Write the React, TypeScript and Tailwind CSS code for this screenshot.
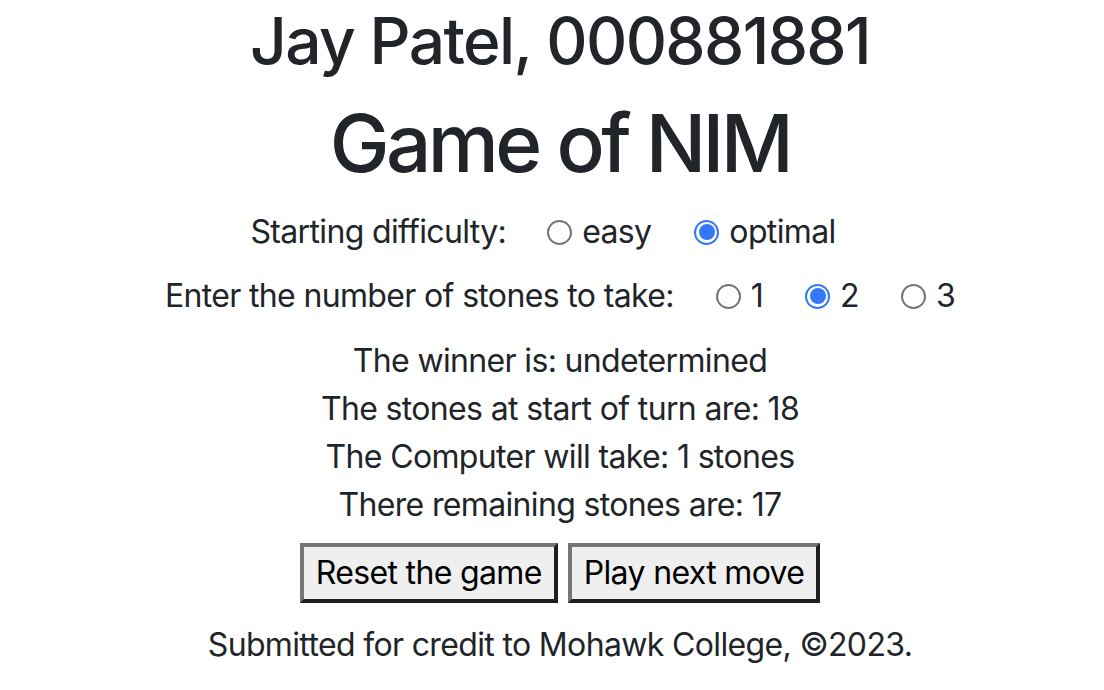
import { useState } from 'react'

function Radio({ checked }: { checked: boolean }) {
  if (checked) {
    return (
      <span className="w-[25px] h-[25px] rounded-full bg-[#3478F6] flex items-center justify-center shrink-0">
        <span className="w-[21px] h-[21px] rounded-full bg-white flex items-center justify-center">
          <span className="w-[16px] h-[16px] rounded-full bg-[#3478F6]" />
        </span>
      </span>
    )
  }
  return <span className="w-[25px] h-[25px] rounded-full border-2 border-[#767676] bg-white shrink-0" />
}

function Option({ label, checked, onClick }: { label: string; checked: boolean; onClick: () => void }) {
  return (
    <label onClick={onClick} className="flex items-center gap-[10px] cursor-pointer">
      <Radio checked={checked} />
      <span>{label}</span>
    </label>
  )
}

export default function App() {
  const [difficulty, setDifficulty] = useState('optimal')
  const [take, setTake] = useState('2')

  return (
    <div className="min-h-screen bg-white pt-[2px] pl-[16px] text-[#212529] text-[32px] leading-[48px] tracking-[-0.65px] font-['Inter','Noto_Sans',sans-serif] flex flex-col items-center text-center">
      <h2 className="text-[64px] leading-[77px] font-medium tracking-[-1.6px]">Jay Patel, 000881881</h2>
      <h1 className="mt-[16px] text-[80px] leading-[96px] font-medium tracking-[-3.6px]">Game of NIM</h1>

      <div className="mt-[17px] flex items-center mr-[34px]">
        <span className="mr-[41px]">Starting difficulty:</span>
        <div className="flex items-center gap-[43px]">
          <Option label="easy" checked={difficulty === 'easy'} onClick={() => setDifficulty('easy')} />
          <Option label="optimal" checked={difficulty === 'optimal'} onClick={() => setDifficulty('optimal')} />
        </div>
      </div>

      <div className="mt-[16px] flex items-center">
        <span className="mr-[42px]">Enter the number of stones to take:</span>
        <div className="flex items-center gap-[42px]">
          {['1', '2', '3'].map(n => (
            <Option key={n} label={n} checked={take === n} onClick={() => setTake(n)} />
          ))}
        </div>
      </div>

      <div className="mt-[17px] flex flex-col">
        <p>The winner is: undetermined</p>
        <p>The stones at start of turn are: 18</p>
        <p>The Computer will take: 1 stones</p>
        <p>There remaining stones are: 17</p>
      </div>

      <div className="mt-[14px] flex gap-[10px]">
        <button className="h-[60px] px-[12px] bg-[#efefef] text-black border-4 border-t-[#767676] border-l-[#767676] border-b-[#1e1e1e] border-r-[#1e1e1e]">
          Reset the game
        </button>
        <button className="h-[60px] px-[12px] bg-[#efefef] text-black border-4 border-t-[#767676] border-l-[#767676] border-b-[#1e1e1e] border-r-[#1e1e1e]">
          Play next move
        </button>
      </div>

      <p className="mt-[18px]">Submitted for credit to Mohawk College, ©2023.</p>
    </div>
  )
}
